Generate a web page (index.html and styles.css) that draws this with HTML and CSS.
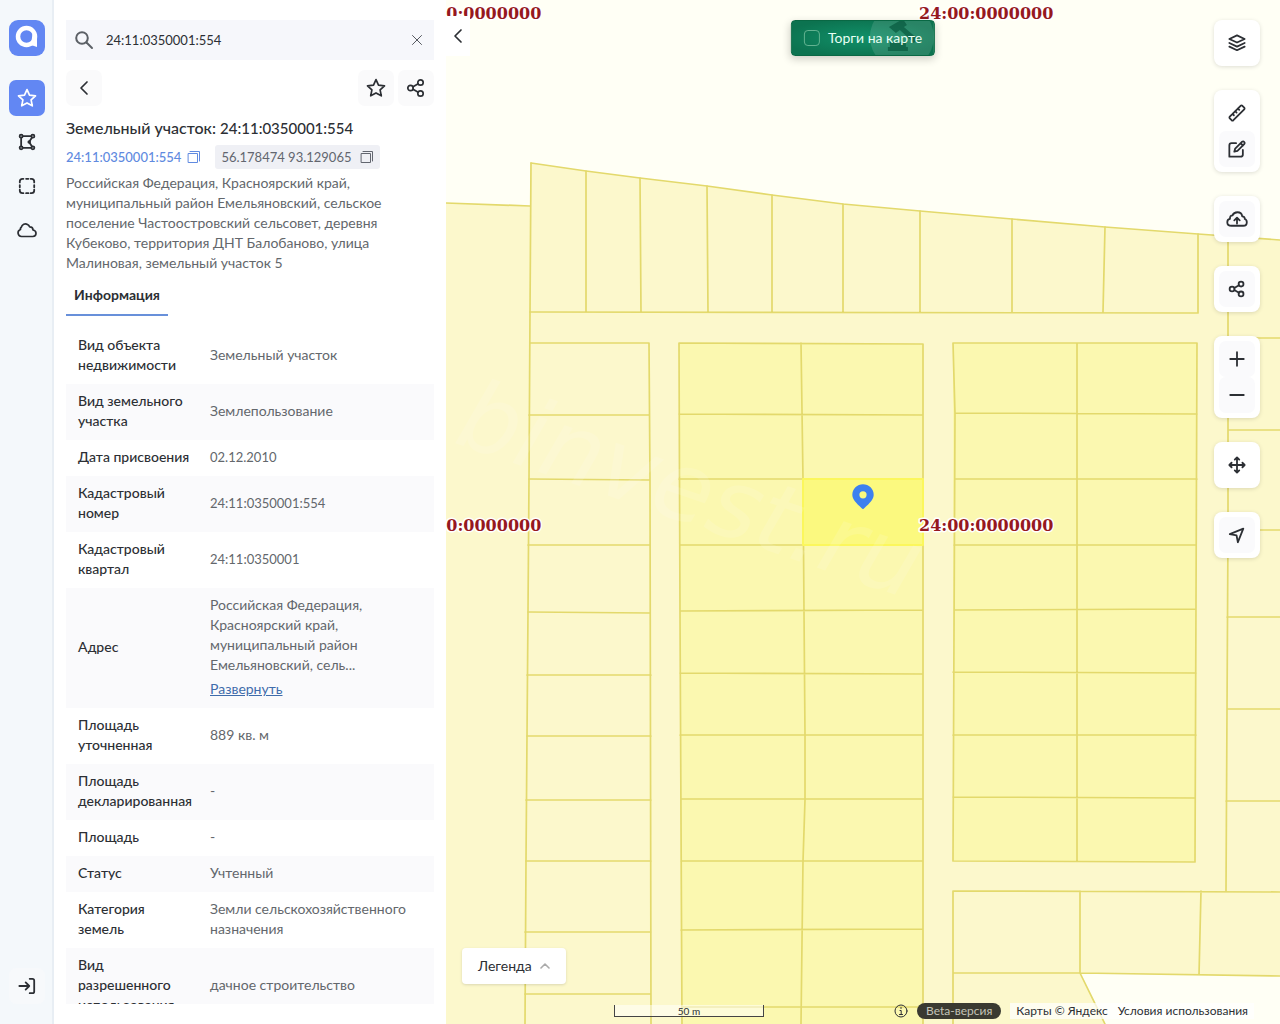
FILE: index.html
```
<!DOCTYPE html>
<html lang="ru">
<head>
<meta charset="utf-8">
<meta name="viewport" content="width=device-width, initial-scale=1">
<title>Земельный участок: 24:11:0350001:554</title>
<link rel="stylesheet" href="styles.css">
</head>
<body>
<svg class="defs" aria-hidden="true">
  <symbol id="star" viewBox="0 0 20 20"><path d="M10 1.600l2.500 5.500 6 .7-4.400 4.100 1.200 5.900-5.300-2.900-5.300 2.900 1.200-5.900L1.500 7.800l6-.7z"/></symbol>
  <symbol id="share" viewBox="0 0 20 20"><circle cx="4.500" cy="10" r="2.700"/><circle cx="14.500" cy="4.500" r="2.700"/><circle cx="14.500" cy="15.500" r="2.700"/><path d="M7 8.800l5.200-3M7 11.200l5.200 3"/></symbol>
  <symbol id="copy" viewBox="0 0 14 14"><path d="M1.500 3.500h9v9h-9zM3 1.500h9.500V11"/></symbol>
  <symbol id="back" viewBox="0 0 20 20"><path d="M13 4l-6 6 6 6"/></symbol>
</svg>
<nav class="rail" aria-label="Разделы">
  <a class="rail-logo" href="#" aria-label="Главная">
    <svg viewBox="0 0 36 36"><circle cx="17.500" cy="16.500" r="8.500" fill="none" stroke="#fff" stroke-width="4.500"/><path d="M23.500 14h4.500v13l-6-2z" fill="#fff"/></svg>
  </a>
  <button class="rail-btn active" aria-label="Избранное"><svg class="icon"><use href="#star"/></svg></button>
  <button class="rail-btn" aria-label="Полигон"><svg class="icon thick" viewBox="0 0 20 20"><circle cx="3.500" cy="3.500" r="1.700"/><circle cx="16.500" cy="3.500" r="1.700"/><circle cx="3.500" cy="16.500" r="1.700"/><circle cx="16.500" cy="16.500" r="1.700"/><circle cx="12.500" cy="10" r="1"/><path d="M5.200 3.500h9.600M3.500 5.200v9.600M5.200 16.500h9.600M15.600 5L13 9M13 11l2.600 4"/></svg></button>
  <button class="rail-btn" aria-label="Выделение"><svg class="icon thick" viewBox="0 0 20 20"><path d="M2 6V5a3 3 0 0 1 3-3h1M9 2h2.500M14 2h1a3 3 0 0 1 3 3v1M18 9v2.500M18 14v1a3 3 0 0 1-3 3h-1M11.500 18H9M6 18H5a3 3 0 0 1-3-3v-1M2 11.500V9"/></svg></button>
  <button class="rail-btn" aria-label="Облако"><svg class="icon" viewBox="0 0 20 20"><path d="M4.500 16.500a3.600 3.600 0 0 1-1-7 2 2 0 0 1 .8-2.300C5 4.500 8 3 10.500 4.400c1.200.6 1.800 1.600 2.200 2.400 2 0 3.300 1.200 3.300 3.200 2 .4 3 1.700 3 3.300 0 1.800-1.300 3.200-3.200 3.200z"/></svg></button>
  <button class="rail-btn login" aria-label="Войти"><svg class="icon thick" viewBox="0 0 20 20"><path d="M1.500 10h11M8.500 6l4 4-4 4M13 2h3a2 2 0 0 1 2 2v12a2 2 0 0 1-2 2h-3"/></svg></button>
</nav>

<aside class="panel">
  <form class="search" role="search">
    <svg class="icon search-icon" viewBox="0 0 20 20"><circle cx="8" cy="8" r="5.800"/><path d="M12.500 12.500l5.500 5.500"/></svg>
    <input class="search-input" type="text" aria-label="Поиск" value="24:11:0350001:554">
    <button class="clear" type="button" aria-label="Очистить"><svg viewBox="0 0 12 12"><path d="M1.500 1.500l9 9M10.500 1.500l-9 9"/></svg></button>
  </form>
  <div class="actions">
    <button class="soft" aria-label="Назад"><svg class="icon"><use href="#back"/></svg></button>
    <button class="soft push" aria-label="В избранное"><svg class="icon"><use href="#star"/></svg></button>
    <button class="soft" aria-label="Поделиться"><svg class="icon"><use href="#share"/></svg></button>
  </div>
  <h1 class="title">Земельный участок: <span>24:11:0350001:554</span></h1>
  <div class="codes">
    <button class="code link">24:11:0350001:554<svg><use href="#copy"/></svg></button>
    <button class="code coords">56.178474 93.129065<svg><use href="#copy"/></svg></button>
  </div>
  <p class="address">Российская Федерация, Красноярский край,<br>муниципальный район Емельяновский, сельское<br>поселение Частоостровский сельсовет, деревня<br>Кубеково, территория ДНТ Балобаново, улица<br>Малиновая, земельный участок 5</p>
  <div class="tabs" role="tablist"><button class="tab" role="tab" aria-selected="true">Информация</button></div>
  <div class="details">
    <table class="info">
      <tbody>
        <tr><th scope="row">Вид объекта недвижимости</th><td>Земельный участок</td></tr>
        <tr><th scope="row">Вид земельного участка</th><td>Землепользование</td></tr>
        <tr><th scope="row">Дата присвоения</th><td class="num">02.12.2010</td></tr>
        <tr><th scope="row">Кадастровый номер</th><td class="num">24:11:0350001:554</td></tr>
        <tr><th scope="row">Кадастровый квартал</th><td class="num">24:11:0350001</td></tr>
        <tr><th scope="row">Адрес</th><td>Российская Федерация, Красноярский край, муниципальный район Емельяновский, сель...<a class="expand" href="#">Развернуть</a></td></tr>
        <tr><th scope="row">Площадь уточненная</th><td>889 кв. м</td></tr>
        <tr><th scope="row">Площадь декларированная</th><td>-</td></tr>
        <tr><th scope="row">Площадь</th><td>-</td></tr>
        <tr><th scope="row">Статус</th><td>Учтенный</td></tr>
        <tr><th scope="row">Категория<br>земель</th><td>Земли сельскохозяйственного назначения</td></tr>
        <tr><th scope="row">Вид<br>разрешенного<br>использования</th><td>дачное строительство</td></tr>
      </tbody>
    </table>
  </div>
</aside>

<main class="map">
  <svg class="canvas" viewBox="446 0 834 1024" preserveAspectRatio="xMinYMin slice">
    <path class="land" d="M446 203L530 206L531 163L586 171L640 178L707 186L772 195L843 204L920 211L1012 219L1105 227L1198 234L1280 240V976L1200 975L1080 973L1105 1024H446z"/>
    <path class="plots" d="M679 343L923 344L923 1024H681z M953 343L1197 343L1195 862L953 861z"/>
    <g class="lines">
      <path d="M446 203L530 206M531 163L586 171L640 178L707 186L772 195L843 204L920 211L1012 219L1105 227L1198 234L1280 240"/>
      <path d="M531 163L530 312L529 480L528 612L527 736L526 861L525 1024"/>
      <path d="M586 171V312M640 178L641 312M707 186L708 312M772 195V312M843 204V312M920 211V312M1012 219V312M1105 227L1103 312M1198 234V313L530 312"/>
      <path d="M530 343H649L650 480L651 1024M529 415H649M529 479L650 480M528 545H650M528 612L650 613M527 675H651M527 736H651M526 800H651M526 861H651M525 932H651M525 994H651"/>
      <path d="M923 1024V344L679 343L680 612L682 1024M801 343L803 479L804 612L805 735V800L803 861L801 1024M679 414L923 415M679 479H923M680 545H923M680 611L923 610M680 673L923 674M680 735H923M681 799H923M681 861H923M681 930L923 929M682 1007H923"/>
      <path d="M953 343L1197 343L1195 862L953 861L955 414zM1077 343V861M955 413L1197 414M955 479H1197M954 545H1196M954 610L1196 609M953 672L1196 673M953 735H1196M953 797L1195 798"/>
      <path d="M1228 236V530L1226 891M1228 338H1280M1228 430H1280M1228 530H1280M1227 617H1280M1227 709H1280M1226 801H1280"/>
      <path d="M1280 892L953 891V1024M1080 891V973M1201 891L1199 975M953 973H1080L1280 976M1080 973L1105 1024"/>
    </g>
    <path class="chosen" d="M803 479H923V545H803z"/>
    <text class="watermark" transform="translate(452 442) rotate(19)">binvest.ru</text>
    <g class="quarter">
      <text x="407" y="19">24:00:0000000</text><text x="919" y="19">24:00:0000000</text>
      <text x="407" y="531">24:00:0000000</text><text x="919" y="531">24:00:0000000</text>
    </g>
    <path fill="#3d80ef" fill-rule="evenodd" d="M863 484.200a10.700 10.700 0 0 1 10.700 10.700c0 5.500-7 10.700-10.700 14.300-3.700-3.600-10.700-8.800-10.700-14.300a10.700 10.700 0 0 1 10.700-10.700zm0 7a3.600 3.600 0 1 0 0 7.200 3.600 3.600 0 0 0 0-7.200z"/>
  </svg>

  <button class="collapse" aria-label="Свернуть панель"><svg class="icon"><use href="#back"/></svg></button>

  <label class="auction">
    <svg class="gavel" viewBox="0 0 64 64"><circle cx="32" cy="32" r="32" fill="#fff" opacity=".12"/><path fill="#05553a" opacity=".65" d="M19 22l14-8 4 6-3 2 14 12-4 4-14-13-4 3zM20 37h16v5h2v4H18v-4h2z"/></svg>
    <input type="checkbox"><span>Торги на карте</span>
  </label>

  <div class="tools">
    <div class="group"><button aria-label="Слои"><svg class="icon" viewBox="0 0 20 20"><path d="M10 1.500l8.500 4-8.500 4-8.500-4zM1.500 10l8.500 4 8.500-4M1.500 14l8.500 4 8.500-4"/></svg></button></div>
    <div class="group">
      <button aria-label="Линейка"><svg class="icon" viewBox="0 0 20 20"><path d="M2 14L14 2q1-.8 2 0l2 2q.8 1 0 2L6 18q-1 .8-2 0l-2-2q-.8-1 0-2zM5 11l1.500 1.500M8 8l1.500 1.500M11 5l1.500 1.500"/></svg></button>
      <button class="tint" aria-label="Рисовать"><svg class="icon" viewBox="0 0 20 20"><path d="M9 3.500H4A2.500 2.500 0 0 0 1.500 6v12.500H14a2.500 2.500 0 0 0 2.500-2.500v-5M7 13l1-3.500L15.500 2q1.500-1 2.500.200 1 1.200 0 2.500L10.500 12zM14 3.500l2.600 2.600"/></svg></button>
    </div>
    <div class="group"><button class="tint" aria-label="Загрузить"><svg class="icon wide" viewBox="0 0 24 20"><path d="M6 17.500C3 17.500 1.200 16 1.200 13.500c0-2 1.300-3.300 3-3.600C4 7.500 5 6 7 6c1-2.500 3-3.500 5.500-3.500 3 0 5 2 5.300 4.500 2 0 3 1.300 2.800 3 1.500.5 2.300 1.700 2.300 3.500 0 2.500-1.700 4-4 4zM12 15V9M9 11.500L12 8.500l3 3"/></svg></button></div>
    <div class="group"><button class="tint" aria-label="Поделиться картой"><svg class="icon"><use href="#share"/></svg></button></div>
    <div class="group">
      <button class="tint" aria-label="Приблизить"><svg class="icon" viewBox="0 0 20 20"><path d="M10 2.500v15M2.500 10h15"/></svg></button>
      <button class="tint" aria-label="Отдалить"><svg class="icon" viewBox="0 0 20 20"><path d="M2.500 10h15"/></svg></button>
    </div>
    <div class="group"><button aria-label="Переместить"><svg class="icon" viewBox="0 0 20 20"><path d="M10 2v16M2 10h16M7.500 4L10 1.500l2.500 2.500M7.500 16l2.500 2.500 2.500-2.500M4 7.500L1.500 10 4 12.500M16 7.500l2.500 2.500-2.500 2.500"/></svg></button></div>
    <div class="group"><button class="tint" aria-label="Моё местоположение"><svg class="icon" viewBox="0 0 20 20"><path d="M2 9L17 3 11 18 9.500 10.500z"/></svg></button></div>
  </div>

  <button class="legend">Легенда<svg viewBox="0 0 10 6"><path d="M1 5l4-4 4 4"/></svg></button>

  <div class="scale">50 m</div>
  <footer class="credits">
    <svg class="about" viewBox="0 0 14 14"><circle cx="7" cy="7" r="6"/><path d="M7 3.500v1M6 6.500h1.200v3.500M5.500 10.500h3"/></svg>
    <span class="beta">Beta-версия</span>
    <div class="copyright"><a href="#">Карты © Яндекс</a><a href="#">Условия использования</a></div>
  </footer>
</main>
</body>
</html>
```
FILE: styles.css
```
* { box-sizing: border-box; }
body {
  margin: 0;
  display: flex;
  height: 100vh;
  overflow: hidden;
  background: #fff;
  color: #2c2f34;
  font: 14px/20px Lato, "Noto Sans", sans-serif;
}
button, input { font: inherit; color: inherit; }
button { border: 0; padding: 0; background: none; cursor: pointer; }
a { color: inherit; text-decoration: none; }
svg { display: block; fill: none; stroke: currentColor; stroke-linecap: round; stroke-linejoin: round; }
.defs { position: absolute; width: 0; height: 0; }
.icon { width: 20px; height: 20px; stroke-width: 1.7; }
.thick { width: 18px; height: 18px; stroke-width: 2; }

.rail {
  flex: none;
  width: 54px;
  display: flex;
  flex-direction: column;
  align-items: center;
  gap: 8px;
  padding: 20px 0;
  background: #f4f8fb;
  box-shadow: inset -2px 0 #e8eef4;
}
.rail-logo { width: 36px; height: 36px; margin-bottom: 16px; border-radius: 9px; background: #6287f3; }
.rail-logo svg { stroke: none; }
.rail-btn { width: 36px; height: 36px; display: grid; place-items: center; border-radius: 7px; }
.rail-btn.active { background: #6287f3; color: #fff; }
.login { margin-top: auto; background: #f7f9fb; }

.panel {
  flex: none;
  width: 392px;
  display: flex;
  flex-direction: column;
  padding: 20px 12px;
  background: #fff;
}
.search { flex: none; display: flex; align-items: center; height: 40px; padding: 0 8px; background: #f6f7fb; }
.search-icon { color: #5c6066; stroke-width: 2; }
.search-input { flex: 1; min-width: 0; margin: 0 12px; padding: 0; border: 0; outline: 0; background: none; font-size: 13px; }
.clear svg { width: 12px; height: 12px; margin: 0 3px; color: #55595f; }
.actions { display: flex; gap: 4px; margin-top: 10px; }
.soft { width: 36px; height: 36px; display: grid; place-items: center; border-radius: 7px; background: #fafafb; }
.push { margin-left: auto; }
.title { margin: 11px 0 6px; font-size: 16px; line-height: 22px; font-weight: 500; }
.title span { font-size: 15px; }
.codes { display: flex; align-items: center; gap: 14px; font-size: 13px; }
.code { display: flex; align-items: center; gap: 6px; height: 24px; }
.code svg { width: 14px; height: 14px; }
.link { color: #608ae0; font-weight: 500; }
.coords { gap: 8px; padding: 0 6px; border-radius: 3px; background: #eff0f5; color: #62666f; }
.address { margin: 4px 0 0; color: #63676c; }
.tabs { display: flex; margin: 3px 0 12px; }
.tab { height: 40px; padding: 0 8px; border-bottom: 2px solid #6890da; font-weight: 700; }
.details { flex: 1; min-height: 0; overflow: hidden; }
.info { width: 100%; table-layout: fixed; border-collapse: collapse; }
.info tr:nth-child(even) { background: #fafafc; }
.info th, .info td { padding: 7px 12px 9px; text-align: left; vertical-align: middle; }
.info th { width: 144px; font-weight: 500; }
.info td { padding-left: 0; color: #63676c; }
.info .num { font-size: 13px; }
.expand { display: block; width: max-content; margin-top: 4px; color: #3f6cab; text-decoration: underline; }

.map { position: relative; flex: 1; min-width: 0; overflow: hidden; background: #fffff5; }
.canvas { width: 100%; height: 100%; stroke: none; }
.land { fill: #fcf8cc; }
.plots { fill: #fbf8b0; }
.lines { stroke: #e3d96c; stroke-width: 1.7; }
.chosen { fill: #fbf97f; stroke: #fbf75c; stroke-width: 2; }
.watermark { font: italic 96px "DejaVu Sans", sans-serif; font-weight: 200; fill: #fff; opacity: .12; }
.quarter { font: bold 16px "DejaVu Serif", serif; fill: #961820; stroke: #fff; stroke-width: 3; paint-order: stroke; }

.collapse { position: absolute; left: 0; top: 16px; width: 24px; height: 40px; display: grid; place-items: center; background: #fff; }
.auction {
  position: absolute;
  left: 50%;
  top: 20px;
  transform: translateX(-50%);
  display: flex;
  align-items: center;
  gap: 8px;
  height: 36px;
  padding: 0 12px;
  overflow: hidden;
  border: 1px solid #096844;
  border-radius: 4px;
  background: radial-gradient(ellipse at center, #119069, #0c7350 80%);
  box-shadow: 0 3px 8px #0003;
  color: #e8fff4;
  white-space: nowrap;
}
.gavel { position: absolute; right: 0; top: -16px; width: 64px; height: 64px; stroke: none; }
.auction input { appearance: none; position: relative; width: 16px; height: 16px; margin: 0; border: 1px solid #63b391; border-radius: 4px; }
.auction span { position: relative; }

.tools { position: absolute; top: 20px; right: 20px; display: flex; flex-direction: column; gap: 24px; }
.group { padding: 5px; border-radius: 8px; background: #fff; box-shadow: 0 1px 4px #0002; }
.group button { width: 36px; height: 36px; display: grid; place-items: center; border-radius: 7px; }
.group .tint { background: #fafafc; }
.group .icon { width: 18px; height: 18px; stroke-width: 2; }
.group .wide { width: 22px; }

.legend {
  position: absolute;
  left: 16px;
  bottom: 40px;
  display: flex;
  align-items: center;
  gap: 8px;
  height: 36px;
  padding: 0 16px;
  border-radius: 4px;
  background: #fff;
  box-shadow: 0 1px 3px #0002;
}
.legend svg { width: 10px; height: 6px; color: #aaa; stroke-width: 1.6; }
.scale {
  position: absolute;
  right: 516px;
  bottom: 7px;
  width: 150px;
  height: 12px;
  border: 1px solid #444;
  border-top: 0;
  background: #ffffff80;
  font-size: 10px;
  line-height: 12px;
  text-align: center;
}
.credits { position: absolute; right: 26px; bottom: 5px; display: flex; align-items: center; gap: 9px; font-size: 12px; line-height: 16px; white-space: nowrap; }
.about { width: 14px; height: 14px; }
.beta { padding: 0 9px; border-radius: 8px; background: #3a3a31; color: #c4c4b8; }
.copyright { display: flex; gap: 10px; padding: 0 6px; background: #ffffffb3; }
```
